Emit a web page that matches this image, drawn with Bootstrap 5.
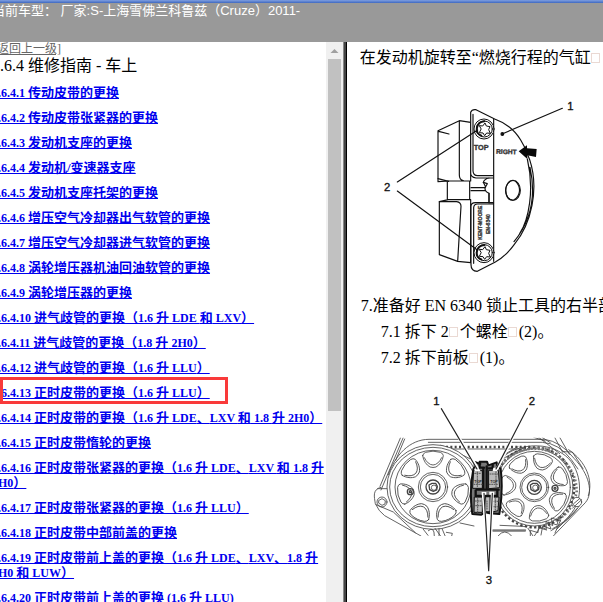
<!DOCTYPE html>
<html lang="zh-CN">
<head>
<meta charset="utf-8">
<meta name="viewport" content="width=device-width, initial-scale=1">
<title>维修指南 - 车上</title>
<link href="https://cdn.jsdelivr.net/npm/bootstrap@5.3.0/dist/css/bootstrap.min.css" rel="stylesheet">
<style>
body{font-family:"Liberation Serif","Noto Sans CJK SC",serif;color:#000;background:#fff}
.topline{height:3px;background:linear-gradient(#7f9fe0,#3f68c0)}
.vehicle{height:39px;background:#999;color:#fff;font:13px/15px "Liberation Sans","Noto Sans CJK SC",sans-serif;overflow:hidden}
.vehicle p{margin-left:-8px}
.toc-pane{flex:0 0 57.5%;min-width:0}
.toc{font-size:13px;line-height:15px;min-width:0}
.back-link{font-size:12px;line-height:14px;color:#666;margin-left:-7px;display:block;width:max-content}
.toc h1{font-size:16px;line-height:20px;font-weight:400;margin:0 0 9px}
.toc li{margin-bottom:10px;margin-left:-2px;position:relative;white-space:nowrap}
.toc li a{color:#00e;font-weight:700}
.toc .lat{font-size:12px;line-height:12px}
.chosen::after{content:"";position:absolute;left:2px;top:-8px;width:228px;height:27px;border:3px solid #f93a3a;pointer-events:none}
.scroll-track{flex:0 0 17px;background:#f0f0f0}
.scroll-arrow{height:17px}
.scroll-thumb{height:352px;width:13px;background:#c1c1c1}
.frame-edge{flex:0 0 4px;background:linear-gradient(90deg,#888 0 1px,#444 1px 3px,#000 3px)}
.manual{font-size:16px;line-height:26px;min-width:0}
.manual p{white-space:nowrap;margin:0}
.blank{display:inline-block;width:9px;height:10px;border:1px solid #ead9d3;margin-right:2px}
.lead-step{padding:3px 0 0 13px}
.step{padding-left:14px}
.substep{padding-left:34px}
.fig-a{display:block;width:220px;margin:19px 0 13px 23px}
.fig-b{display:block;width:243px;margin:8px 0 0 13px}
svg text{font-family:"Liberation Sans",sans-serif}
</style>
<script src="https://cdn.jsdelivr.net/npm/bootstrap@5.3.0/dist/js/bootstrap.bundle.min.js"></script>
</head>
<body class="vh-100 overflow-hidden d-flex flex-column">
<div class="topline flex-shrink-0"></div>
<header class="vehicle flex-shrink-0"><p class="mb-0 text-nowrap">当前车型： 厂家:S-上海雪佛兰科鲁兹（Cruze）2011-</p></header>
<div class="d-flex flex-grow-1 overflow-hidden">
<div class="toc-pane d-flex overflow-hidden">
<nav class="toc flex-grow-1 overflow-hidden">
<a class="back-link" href="#">[返回上一级]</a>
<h1>.6.4 维修指南 - 车上</h1>
<ul class="list-unstyled mb-0">
<li><a href="#"><span class="lat">.6.4.1 </span>传动皮带的更换</a></li>
<li><a href="#"><span class="lat">.6.4.2 </span>传动皮带张紧器的更换</a></li>
<li><a href="#"><span class="lat">.6.4.3 </span>发动机支座的更换</a></li>
<li><a href="#"><span class="lat">.6.4.4 </span>发动机/变速器支座</a></li>
<li><a href="#"><span class="lat">.6.4.5 </span>发动机支座托架的更换</a></li>
<li><a href="#"><span class="lat">.6.4.6 </span>增压空气冷却器出气软管的更换</a></li>
<li><a href="#"><span class="lat">.6.4.7 </span>增压空气冷却器进气软管的更换</a></li>
<li><a href="#"><span class="lat">.6.4.8 </span>涡轮增压器机油回油软管的更换</a></li>
<li><a href="#"><span class="lat">.6.4.9 </span>涡轮增压器的更换</a></li>
<li><a href="#"><span class="lat">.6.4.10 </span>进气歧管的更换（<span class="lat">1.6 </span>升<span class="lat"> LDE </span>和<span class="lat"> LXV</span>）</a></li>
<li><a href="#"><span class="lat">.6.4.11 </span>进气歧管的更换（<span class="lat">1.8 </span>升<span class="lat"> 2H0</span>）</a></li>
<li><a href="#"><span class="lat">.6.4.12 </span>进气歧管的更换（<span class="lat">1.6 </span>升<span class="lat"> LLU</span>）</a></li>
<li class="chosen"><a href="#"><span class="lat">.6.4.13 </span>正时皮带的更换（<span class="lat">1.6 </span>升<span class="lat"> LLU</span>）</a></li>
<li><a href="#"><span class="lat">.6.4.14 </span>正时皮带的更换（<span class="lat">1.6 </span>升<span class="lat"> LDE</span>、<span class="lat">LXV </span>和<span class="lat"> 1.8 </span>升<span class="lat"> 2H0</span>）</a></li>
<li><a href="#"><span class="lat">.6.4.15 </span>正时皮带惰轮的更换</a></li>
<li><a href="#"><span class="lat">.6.4.16 </span>正时皮带张紧器的更换（<span class="lat">1.6 </span>升<span class="lat"> LDE</span>、<span class="lat">LXV </span>和<span class="lat"> 1.8 </span>升<br><span class="lat">H0</span>）</a></li>
<li><a href="#"><span class="lat">.6.4.17 </span>正时皮带张紧器的更换（<span class="lat">1.6 </span>升<span class="lat"> LLU</span>）</a></li>
<li><a href="#"><span class="lat">.6.4.18 </span>正时皮带中部前盖的更换</a></li>
<li><a href="#"><span class="lat">.6.4.19 </span>正时皮带前上盖的更换（<span class="lat">1.6 </span>升<span class="lat"> LDE</span>、<span class="lat">LXV</span>、<span class="lat">1.8 </span>升<br><span class="lat">H0 </span>和<span class="lat"> LUW</span>）</a></li>
<li><a href="#"><span class="lat">.6.4.20 </span>正时皮带前上盖的更换<span class="lat"> (1.6 </span>升<span class="lat"> LLU)</span></a></li>
</ul>
</nav>
<div class="scroll-track"><svg class="scroll-arrow d-block" width="17" height="17" viewBox="0 0 17 17"><path d="M4.500 11 8.500 7l4 4z" fill="#a0a0a0"/></svg><div class="scroll-thumb ms-auto me-auto"></div></div>
<div class="frame-edge"></div>
</div>
<main class="manual flex-grow-1 overflow-hidden">
<p class="lead-step">在发动机旋转至“燃烧行程的气缸<span class="blank"></span></p>
<svg class="fig-a" viewBox="0 0 660 570" fill="none" stroke="#111" stroke-width="3.500" stroke-linejoin="round" stroke-linecap="round" role="img" aria-label="锁止工具">
<path fill="#fff" d="M204 122 268 92 302 97V273H237L204 275ZM268 92V255Q268 270 280 272M206 124 237 132M232 273V329H299V273ZM208 335 235 329H302V518L263 514 208 494Z"/>
<path d="M263 514 273 349Q273 337 260 335L208 335M236 274 204 266"/>
<path fill="#fff" d="M302 67Q306 57 318 59L374 87Q425 105 452 150L464 172L479 209C508 297 484 402 433 463Q407 499 376 516L322 544Q303 543 303 524V349Q303 338 317 338H357V310Q344 304 345 293L352 281 340 277Q343 267 357 264H318Q302 262 302 250Z"/>
<path d="M371 87V514M309 73V243Q310 257 323 257H371M311 520V353Q312 342 323 342H371M303 293H345M303 302H345M357 264H371M357 338H371M357 310V337M340 277 347 291M480 232C501 327 478 399 432 455M472 207C494 300 476 390 449 431"/>
<ellipse cx="429" cy="301" rx="22" ry="30"/><path d="M420 274C398 292 407 330 427 330M437 274C457 295 448 320 432 329"/>
<g id="torx"><circle cx="342" cy="117" r="30" fill="#fff" stroke-width="3"/><circle cx="343" cy="117" r="24" stroke-width="3"/><path stroke-width="3" d="M329 107 338 108 345 99 349 108 360 110 356 119 361 130 350 129 344 137 339 129 328 128 333 118Z"/><path stroke-width="6" d="M343 94C318 96 312 129 334 137"/></g>
<use href="#torx" y="371"/>
<path d="M82 276 323 120M82 303 322 480M577 55 398 131"/><circle cx="397" cy="132" r="4" fill="#111"/>
<path fill="#080808" stroke="none" d="M446 184 471 166V175L500 177 498 201 472 196 472 207Z"/>
<g fill="#333" stroke="#333" stroke-width="1" font-weight="700"><text x="311" y="180" font-size="22">TOP</text><text x="378" y="191" font-size="20" transform="rotate(2 378 190)">RIGHT</text><g font-size="15"><text transform="translate(337 449) rotate(-90)">KENT-MOORE</text><text transform="translate(359 432) rotate(-90)">EN-6340</text></g></g>
<g fill="#111" stroke="#111" stroke-width="1" font-size="34"><text x="592" y="59">1</text><text x="42" y="303">2</text></g>
</svg>
<p class="step">7.准备好 EN 6340 锁止工具的右半部</p>
<p class="substep">7.1 拆下 2<span class="blank"></span>个螺栓<span class="blank"></span>(2)。</p>
<p class="substep">7.2 拆下前板<span class="blank"></span>(1)。</p>
<svg class="fig-b" viewBox="0 0 729 666" fill="none" stroke="#444" stroke-width="2.500" stroke-linejoin="round" stroke-linecap="round" role="img" aria-label="凸轮轴链轮与锁止工具">
<defs>
<clipPath id="crop"><path d="M30 176H700V471H30Z"/></clipPath>
<path id="slot" d="M-31-94Q-30-101-22-104Q0-111 22-104Q30-101 31-94C29-79 20-66 9-60Q0-57-9-60C-20-66-29-79-31-94ZM-26-88Q-16-67 0-66 16-67 26-88"/>
<g id="slots"><use href="#slot"/><use href="#slot" transform="rotate(51)"/><use href="#slot" transform="rotate(103)"/><use href="#slot" transform="rotate(154)"/><use href="#slot" transform="rotate(206)"/><use href="#slot" transform="rotate(257)"/><use href="#slot" transform="rotate(309)"/></g>
</defs>
<g clip-path="url(#crop)">
<path d="M130 175 63 333M122 175 60 322M134 180 107 244M85 287C105 229 149 181 207 181H553Q602 187 642 238C688 285 701 342 676 371L580 471M63 325C36 331 43 354 46 374Q56 397 74 410L183 471M53 329H82M48 377 100 399 166 461M205 190H547Q597 193 634 242L654 270M521 175 556 186M536 175 599 224M546 175 571 191M584 175 608 220M599 175 628 226M626 212C679 248 700 304 685 350M609 218 637 219 669 269M300 432 342 441M420 439 510 443M398 453H497"/>
<path stroke-width="6" stroke="#777" d="M399 455H495"/>
<circle cx="66" cy="369" r="15"/><path d="M57 364 66 359 76 365 75 375 66 379 57 373Z"/>
<path stroke-width="7" stroke-dasharray="6 7" stroke-linecap="butt" d="M245 204H510"/><path d="M230 210H520M243 199 310 250M280 214 329 239"/>
<circle cx="523" cy="325" r="120" stroke-width="7" stroke-dasharray="7 7" stroke-linecap="butt" fill="#fff"/>
<circle cx="523" cy="325" r="116"/><circle cx="523" cy="325" r="108"/>
<path stroke-width="8" stroke="#777" stroke-dasharray="5 6" stroke-linecap="butt" d="M421 264C457 208 531 193 589 226Q650 270 650 340 634 406 586 424"/><path d="M420 244C455 197 553 185 606 223 665 258 674 355 635 401Q615 431 578 449M432 227 474 203M430 238 492 206"/>
<path stroke-width="6" stroke="#777" stroke-dasharray="5 5" stroke-linecap="butt" d="M425 250C470 211 535 198 583 214"/>
<use href="#slots" transform="translate(523 325) rotate(17) scale(.950)"/>
<circle cx="523" cy="325" r="43" fill="#fff"/><circle cx="523" cy="325" r="38"/><circle cx="523" cy="325" r="21" stroke-width="4"/><path stroke-width="4" d="M511 318 519 313H530L537 320 536 331 525 338 513 332Z"/><circle cx="526" cy="326" r="8"/>
<ellipse cx="219" cy="324" rx="138" ry="127" fill="#fff"/><ellipse cx="219" cy="324" rx="130" ry="119"/><ellipse cx="219" cy="324" rx="114" ry="110"/>
<use href="#slots" transform="translate(219 324)"/>
<circle cx="219" cy="324" r="44" fill="#fff"/><circle cx="219" cy="324" r="38"/><circle cx="219" cy="324" r="21" stroke-width="4"/><path stroke-width="4" d="M207 318 216 313H227L232 322 230 333 220 337 209 332Z"/><circle cx="222" cy="326" r="8"/>
<g stroke-width="4"><circle cx="151" cy="338" r="9"/><circle cx="151" cy="338" r="3"/><circle cx="585" cy="328" r="9"/><circle cx="585" cy="328" r="3"/></g>
<g fill="#fff"><circle cx="651" cy="369" r="14"/><path d="M641 374 659 359M638 387 665 362"/></g>
<path d="M205 455Q223 440 223 471M225 448 241 470M237 449V471M247 451 255 470M259 460 277 463 275 471M190 451 204 469M414 471Q434 446 455 471M511 471V454L534 461 536 441 559 451 558 427 578 440 574 417 602 426M523 471 539 447 560 453M543 468 548 441 573 450 565 429 591 438 597 414M573 455Q630 425 657 382M504 448 519 471M590 451 652 388M585 462 602 423"/>
</g>
<g stroke="#111"><path fill="#777" stroke-width="6" d="M344 263V249L361 255 359 248H381L385 259 410 250 412 264 422 269Q430 332 418 405L389 403 375 400 364 407 337 405Q327 335 340 270Z"/>
<path fill="#bbb" stroke-width="3" d="M342 275H367V328H339ZM387 274H415L419 326 387 329ZM344 354H367V400H343ZM397 354H417L414 395 397 399ZM378 352H390V398H378Z"/>
<path stroke-width="7" d="M380 262V328M372 266H359V256M386 268H398V257M350 332H416M347 334V351H412V333M370 267V330"/>
<path stroke-width="3" stroke="#555" stroke-dasharray="3 4" d="M344 283H363M390 285H415M342 316H366M388 316H416M346 366H366M398 367H414M347 380H366M397 383H412M381 366V392M352 278V325M408 278V327M353 355V401M406 355V397"/>
<path fill="#fff" stroke="none" d="M343 269 355 266 362 277H344ZM400 266H418L411 276H398ZM365 339H379V347H365ZM388 338H403V347H388Z"/>
<g fill="#222" stroke="none" font-size="11" font-weight="700"><text x="343" y="311">TOP</text><text x="391" y="311">TOP</text></g></g>
<g stroke="#fff" stroke-width="9"><path d="M244 89 351 265M502 88 413 265M370 347 386 575M397 347 388 575"/></g>
<g stroke="#222" stroke-width="3.500"><path d="M244 89 351 270M502 88 408 270M372 343 386 575 397 343"/></g>
<g fill="#111" stroke="#111" stroke-width="1" font-size="34"><text x="220" y="77">1</text><text x="506" y="77">2</text><text x="377" y="614">3</text></g>
</svg>
</main>
</div>
</body>
</html>
